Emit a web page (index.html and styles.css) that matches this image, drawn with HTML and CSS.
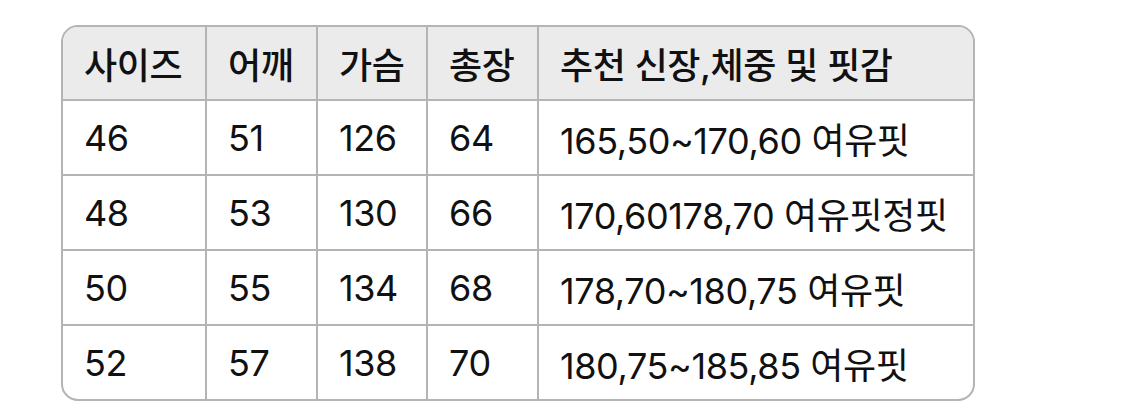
FILE: index.html
```html
<!DOCTYPE html>
<html lang="ko">
<head>
<meta charset="utf-8">
<link rel="stylesheet" href="styles.css">
</head>
<body>
<div class="wrap">
<table class="size">
<colgroup><col class="c1"><col class="c2"><col class="c3"><col class="c4"><col class="c5"></colgroup>
<thead>
<tr><th>사이즈</th><th>어깨</th><th>가슴</th><th>총장</th><th>추천 신장,체중 및 핏감</th></tr>
</thead>
<tbody>
<tr><td>46</td><td>51</td><td>126</td><td>64</td><td>165,50~170,60 여유핏</td></tr>
<tr><td>48</td><td>53</td><td>130</td><td>66</td><td>170,60178,70 여유핏정핏</td></tr>
<tr><td>50</td><td>55</td><td>134</td><td>68</td><td>178,70~180,75 여유핏</td></tr>
<tr><td>52</td><td>57</td><td>138</td><td>70</td><td>180,75~185,85 여유핏</td></tr>
</tbody>
</table>
</div>
</body>
</html>
```
FILE: styles.css
```css
html, body { margin: 0; padding: 0; background: #fff; }
.wrap { padding: 25px 0 0 61px; }
.size {
  border-collapse: separate;
  border-spacing: 0;
  border: 2px solid #b4b4b4;
  border-radius: 17px;
  overflow: hidden;
  table-layout: fixed;
  width: 914px;
  font-family: Inter, "Noto Sans CJK KR", sans-serif;
  color: #111;
}
.c1 { width: 144px; }
.c2 { width: 111px; }
.c3 { width: 110px; }
.c4 { width: 111px; }
.c5 { width: auto; }
.size th, .size td {
  text-align: left;
  padding: 0 0 0 21px;
  border-right: 2px solid #b4b4b4;
  border-bottom: 2px solid #b4b4b4;
  white-space: nowrap;
  font-size: 36px;
  letter-spacing: -0.4px;
}
.size th:last-child, .size td:last-child { border-right: none; }
.size tbody tr:last-child td { border-bottom: none; }
.size th {
  background: #ebebeb;
  font-weight: 500;
  height: 72px;
}
.size td {
  font-weight: 400;
  height: 73px;
}
```
